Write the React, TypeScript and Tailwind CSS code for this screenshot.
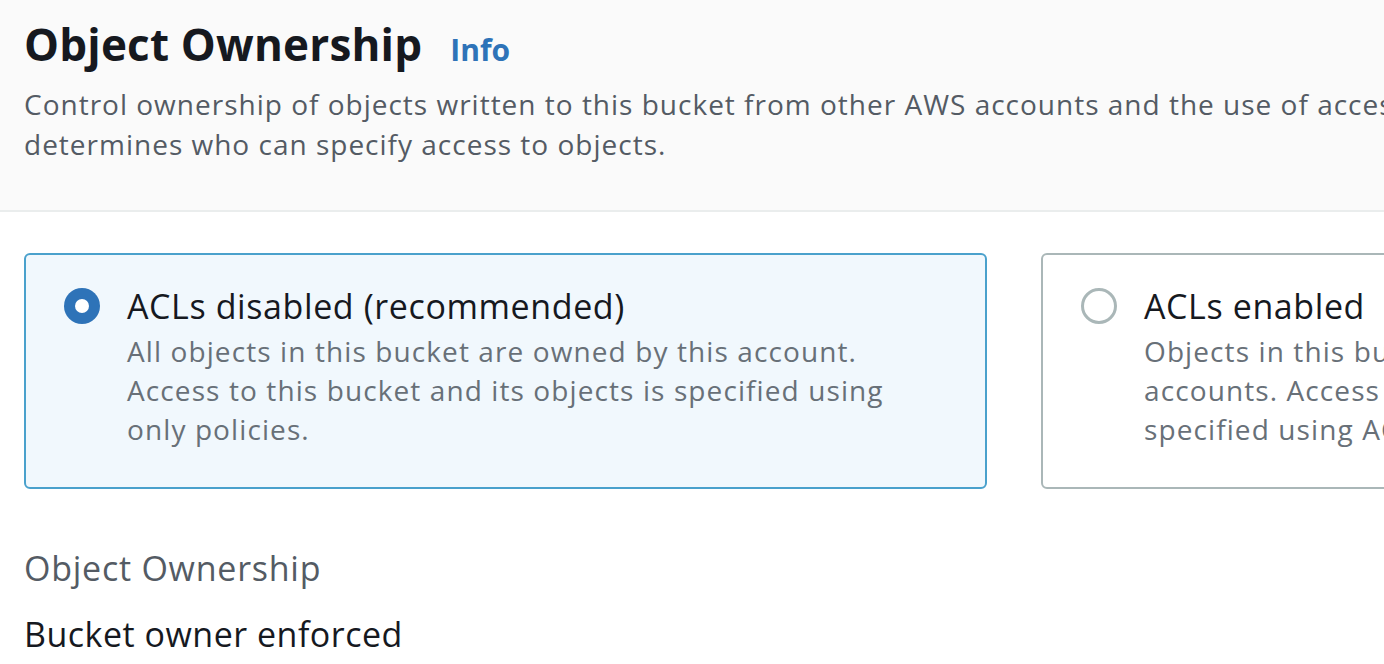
import { useState } from 'react'

type Option = {
    id: string
    title: string
    lines: string[]
}

const OPTIONS: Option[] = [
    {
        id: 'disabled',
        title: 'ACLs disabled (recommended)',
        lines: [
            'All objects in this bucket are owned by this account.',
            'Access to this bucket and its objects is specified using',
            'only policies.',
        ],
    },
    {
        id: 'enabled',
        title: 'ACLs enabled',
        lines: [
            'Objects in this bucket can be owned by other AWS',
            'accounts. Access to this bucket and its objects can be',
            'specified using ACLs.',
        ],
    },
]

function Radio({ checked }: { checked: boolean }) {
    if (checked) {
        return (
            <span className="shrink-0 w-[36px] h-[36px] rounded-full bg-[#2e73b8] flex items-center justify-center">
                <span className="w-[14px] h-[14px] rounded-full bg-white" />
            </span>
        )
    }
    return (
        <span className="shrink-0 w-[36px] h-[36px] rounded-full border-[3px] border-[#aab7b8] bg-white" />
    )
}

export default function App() {
    const [selected, setSelected] = useState('disabled')

    return (
        <div className="w-full h-[664px] overflow-hidden bg-white font-['Open_Sans',sans-serif] text-[#16191f]">
            <div className="w-[2200px]">
                <header className="h-[212px] bg-[#fafafa] border-b-2 border-[#eaeded] px-[24px] pt-[18px]">
                    <div className="flex items-baseline gap-[28px]">
                        <h2 className="text-[44px] leading-[52px] font-bold tracking-[0.2px]">
                            Object Ownership
                        </h2>
                        <a className="text-[30px] font-bold text-[#2e73b8]">Info</a>
                    </div>
                    <p className="mt-[12px] text-[28px] leading-[40px] tracking-[1px] text-[#545b64] whitespace-nowrap">
                        Control ownership of objects written to this bucket from other AWS accounts and the use of access control lists (ACLs). Object Ownership
                        <br />
                        determines who can specify access to objects.
                    </p>
                </header>

                <div className="px-[24px] pt-[41px]">
                    <div className="grid grid-cols-[963px_963px] gap-[54px]">
                        {OPTIONS.map((opt) => {
                            const checked = selected === opt.id
                            return (
                                <div
                                    key={opt.id}
                                    onClick={() => setSelected(opt.id)}
                                    className={
                                        checked
                                            ? 'h-[236px] rounded-[6px] border-2 border-[#4aa1cc] bg-[#f1f8fd] pl-[38px] pt-[29px] flex gap-[27px]'
                                            : 'h-[236px] rounded-[6px] border-2 border-[#aab7b8] bg-white pl-[38px] pt-[29px] flex gap-[27px]'
                                    }
                                >
                                    <div className="h-[44px] flex items-center">
                                        <Radio checked={checked} />
                                    </div>
                                    <div>
                                        <div className="text-[34px] leading-[44px] tracking-[0.6px]">{opt.title}</div>
                                        <p className="mt-[4px] text-[28px] leading-[39px] tracking-[1.1px] text-[#687078] whitespace-nowrap">
                                            {opt.lines.map((line) => (
                                                <span key={line} className="block">
                                                    {line}
                                                </span>
                                            ))}
                                        </p>
                                    </div>
                                </div>
                            )
                        })}
                    </div>

                    <div className="mt-[57px] text-[34px] leading-[44px] tracking-[0.75px] text-[#545b64]">
                        Object Ownership
                    </div>
                    <div className="mt-[22px] text-[34px] leading-[44px] tracking-[0.5px]">
                        Bucket owner enforced
                    </div>
                </div>
            </div>
        </div>
    )
}
